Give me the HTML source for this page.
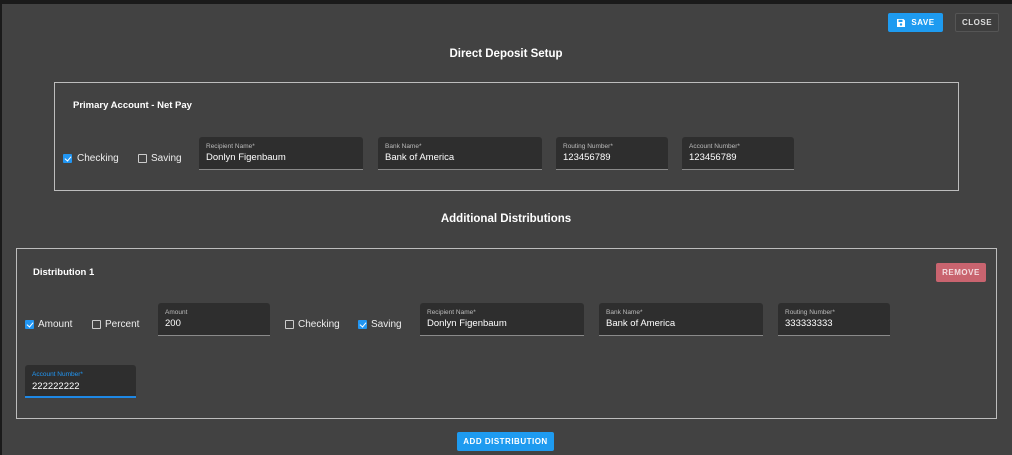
<!DOCTYPE html>
<html><head><meta charset="utf-8"><style>
*{box-sizing:border-box;margin:0;padding:0}
body{width:1012px;height:455px;background:#424242;font-family:"Liberation Sans",sans-serif;color:#fff;position:relative;overflow:hidden}
.a{position:absolute}
.top{left:0;top:0;width:1012px;height:4px;background:#1a1a1a}
.lb{left:0;top:0;width:2px;height:455px;background:#1a1a1a}
.btn{position:absolute;font-size:8px;font-weight:bold;letter-spacing:.5px;display:flex;align-items:center;justify-content:center;border-radius:2px}
.h{position:absolute;font-size:11.5px;font-weight:bold;transform:translateX(-50%)}
.box{position:absolute;border:1px solid #bdbdbd}
.f{position:absolute;background:#2e2e2e;border-bottom:1px solid #8a8a8a;border-radius:3px 3px 0 0}
.f .l{position:absolute;left:7px;top:6px;font-size:6.5px;color:#bbb}
.f .v{position:absolute;left:7px;top:15px;font-size:9.5px;color:#fff}
.cb{position:absolute;width:9px;height:9px;border:1px solid #ccc;border-radius:1px}
.cb.on{background:#2196f3;border-color:#2196f3}
.cb.on::after{content:"";position:absolute;left:2px;top:0;width:3px;height:5px;border:solid #fff;border-width:0 1.5px 1.5px 0;transform:rotate(40deg)}
.t{position:absolute;font-size:10px;color:#eee}
.sub{position:absolute;font-size:9.5px;font-weight:bold}
</style></head><body>
<div class="a top"></div><div class="a lb"></div>
<div class="btn" style="left:888px;top:13px;width:55px;height:19px;background:#1e9bf0;color:#fff">
<svg width="10" height="10" viewBox="0 0 10 10" style="margin-right:5px"><path d="M1 1h6.5L9 2.5V9H1z" fill="#fff"/><rect x="2.5" y="1.8" width="4" height="2.2" fill="#1e9bf0"/><circle cx="5" cy="6.5" r="1.2" fill="#1e9bf0"/></svg>SAVE</div>
<div class="btn" style="left:955px;top:13px;width:44px;height:19px;border:1px solid #555;color:#ddd;background:#3e3e3e">CLOSE</div>
<div class="h" style="left:506px;top:48px">Direct Deposit Setup</div>
<div class="box" style="left:54px;top:82px;width:905px;height:109px"></div>
<div class="sub" style="left:73px;top:100px">Primary Account - Net Pay</div>
<div class="cb on" style="left:63px;top:154px"></div><div class="t" style="left:77px;top:153px">Checking</div>
<div class="cb" style="left:138px;top:154px"></div><div class="t" style="left:151px;top:153px">Saving</div>
<div class="f" style="left:199px;top:137px;width:164px;height:33px"><div class="l">Recipient Name*</div><div class="v">Donlyn Figenbaum</div></div>
<div class="f" style="left:378px;top:137px;width:164px;height:33px"><div class="l">Bank Name*</div><div class="v">Bank of America</div></div>
<div class="f" style="left:556px;top:137px;width:112px;height:33px"><div class="l">Routing Number*</div><div class="v">123456789</div></div>
<div class="f" style="left:682px;top:137px;width:112px;height:33px"><div class="l">Account Number*</div><div class="v">123456789</div></div>
<div class="h" style="left:506px;top:213px">Additional Distributions</div>
<div class="box" style="left:16px;top:248px;width:981px;height:171px"></div>
<div class="sub" style="left:33px;top:267px">Distribution 1</div>
<div class="btn" style="left:936px;top:263px;width:50px;height:19px;background:#c9646f;color:#f3dde0">REMOVE</div>
<div class="cb on" style="left:25px;top:320px"></div><div class="t" style="left:38px;top:319px">Amount</div>
<div class="cb" style="left:92px;top:320px"></div><div class="t" style="left:105px;top:319px">Percent</div>
<div class="f" style="left:158px;top:303px;width:112px;height:33px"><div class="l">Amount</div><div class="v">200</div></div>
<div class="cb" style="left:285px;top:320px"></div><div class="t" style="left:298px;top:319px">Checking</div>
<div class="cb on" style="left:358px;top:320px"></div><div class="t" style="left:371px;top:319px">Saving</div>
<div class="f" style="left:420px;top:303px;width:164px;height:33px"><div class="l">Recipient Name*</div><div class="v">Donlyn Figenbaum</div></div>
<div class="f" style="left:599px;top:303px;width:164px;height:33px"><div class="l">Bank Name*</div><div class="v">Bank of America</div></div>
<div class="f" style="left:778px;top:303px;width:112px;height:33px"><div class="l">Routing Number*</div><div class="v">333333333</div></div>
<div class="f" style="left:25px;top:365px;width:111px;height:33px;border-bottom:2px solid #1e88e5"><div class="l" style="color:#2196f3">Account Number*</div><div class="v" style="top:16px">222222222</div></div>
<div class="btn" style="left:457px;top:432px;width:97px;height:19px;background:#1e9bf0;color:#fff">ADD DISTRIBUTION</div>
</body></html>
